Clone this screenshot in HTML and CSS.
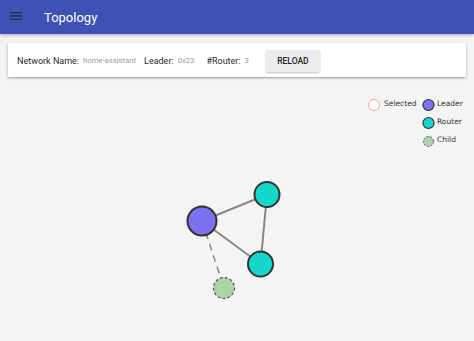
FILE: index.html
```html
<!DOCTYPE html>
<html lang="en">
<head>
    <meta charset="UTF-8">
    <meta name="viewport" content="width=device-width, initial-scale=1.0">
    <title>Topology</title>
    <link rel="stylesheet" href="styles.css">
</head>
<body>
    <!-- top bar -->
    <div class="toolbar">
        <svg class="menu-icon" width="12" height="8" viewBox="0 0 12 8">
            <rect x="0" y="0" width="12" height="1.3"/>
            <rect x="0" y="3.3" width="12" height="1.3"/>
            <rect x="0" y="6.6" width="12" height="1.3"/>
        </svg>
        <span class="title">Topology</span>
    </div>

    <!-- network info -->
    <div class="card">
        <span class="label">Network Name:</span>
        <span class="value">home-assistant</span>
        <span class="label">Leader:</span>
        <span class="value">0x23</span>
        <span class="label">#Router:</span>
        <span class="value">3</span>
        <button class="reload">RELOAD</button>
    </div>

    <!-- graph canvas, y = page y - 77 -->
    <svg class="graph" width="474" height="264" viewBox="0 0 474 264">
        <g class="legend">
            <circle class="selected" cx="374" cy="28" r="5.5"/>
            <text x="384" y="29">Selected</text>
            <circle class="leader" cx="428.5" cy="28" r="5.5"/>
            <text x="437" y="29">Leader</text>
            <circle class="router" cx="428.5" cy="46" r="5.5"/>
            <text x="437" y="47">Router</text>
            <circle class="child" cx="428.5" cy="64.5" r="5"/>
            <text x="437" y="65">Child</text>
        </g>

        <line class="link" x1="202" y1="144" x2="267" y2="117.5"/>
        <line class="link" x1="202" y1="144" x2="260.5" y2="187"/>
        <line class="link" x1="267" y1="117.5" x2="260.5" y2="187"/>
        <line class="link dashed" x1="202" y1="144" x2="224" y2="211"/>

        <circle class="node leader" cx="202" cy="144" r="14.5"/>
        <circle class="node router" cx="267" cy="117.5" r="12.5"/>
        <circle class="node router" cx="260.5" cy="187" r="12.5"/>
        <circle class="node child" cx="224" cy="211" r="10.5"/>
    </svg>
</body>
</html>
```

FILE: styles.css
```css
*{
    margin: 0;
    padding: 0;
    box-sizing: border-box;
}
body{
    width: 474px;
    height: 341px;
    overflow: hidden;
    background-color: #f4f4f4;
    font-family: Roboto, "Liberation Sans", sans-serif;
    color: #333;
}
.toolbar{
    height: 34px;
    background-color: #3f51b5;
    display: flex;
    align-items: center;
    padding-left: 10px;
    box-shadow: 0 1px 3px rgba(0,0,0,0.3);
    position: relative;
}
.menu-icon{
    fill: #1e2658;
    margin-top: -3px;
}
.title{
    color: #fff;
    font-size: 13px;
    margin-left: 22px;
}
.card{
    margin: 9px 8px 0;
    height: 34px;
    background-color: #fff;
    display: flex;
    align-items: center;
    padding-left: 9px;
    padding-top: 1px;
    box-shadow: 0 1px 3px rgba(0,0,0,0.25), 0 1px 1px rgba(0,0,0,0.12);
}
.label{
    font-size: 9px;
    color: #2a2a2a;
    margin-right: 4px;
}
.value{
    font-size: 7.7px;
    color: #9a9a9a;
    margin-right: 8px;
}
.value:nth-child(4){
    margin-right: 12px;
}
.reload{
    margin-left: 9px;
    width: 54px;
    height: 22px;
    border: none;
    border-radius: 2px;
    background-color: #ececec;
    font-family: Roboto, "Liberation Sans", sans-serif;
    font-weight: 500;
    font-size: 8.5px;
    color: #222;
    box-shadow: 0 1px 2px rgba(0,0,0,0.25);
}
.graph{
    display: block;
}
.legend text{
    font-family: "DejaVu Sans", sans-serif;
    font-size: 7.5px;
    fill: #333;
}
.selected{
    fill: #fff;
    stroke: #f0a8a8;
    stroke-width: 1;
}
.leader{
    fill: #7b72f2;
    stroke: #333;
    stroke-width: 1.2;
}
.router{
    fill: #14d8cc;
    stroke: #333;
    stroke-width: 1.2;
}
.child{
    fill: #a9d5a9;
    stroke: #555;
    stroke-width: 1;
    stroke-dasharray: 2 1.5;
}
.node{
    stroke-width: 2;
}
.node.child{
    stroke-width: 1.2;
    stroke-dasharray: 3 2;
}
.link{
    stroke: #8e8484;
    stroke-width: 2;
}
.link.dashed{
    stroke: #888;
    stroke-width: 1.5;
    stroke-dasharray: 7 5;
}
```
